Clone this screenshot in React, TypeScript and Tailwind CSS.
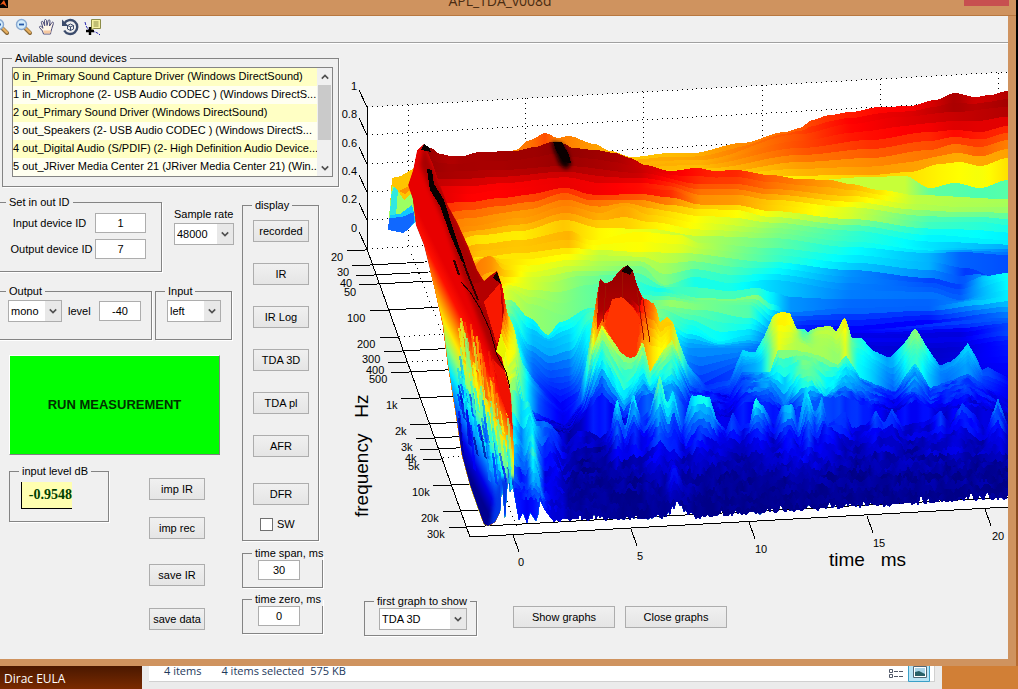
import type { ReactNode } from 'react';

type Key = [x: number, y: number, value: number];

interface Slice {
  steps: number;
  sharp?: boolean;
  noise?: number;
  keys: Key[];
}

const DEVICES = [
  '0 in_Primary Sound Capture Driver (Windows DirectSound)',
  '1 in_Microphone (2- USB Audio CODEC ) (Windows DirectS...',
  '2 out_Primary Sound Driver (Windows DirectSound)',
  '3 out_Speakers (2- USB Audio CODEC ) (Windows DirectS...',
  '4 out_Digital Audio (S/PDIF) (2- High Definition Audio Device...',
  '5 out_JRiver Media Center 21 (JRiver Media Center 21) (Win...',
];

// Slices of the waterfall, from the back of the plot to the front
const SLICES: Slice[] = [
  { steps: 1, keys: [[500, 158, 0.75], [515, 150, 0.75], [530, 140, 0.76], [545, 133, 0.8], [558, 138, 0.75], [568, 136, 0.75], [595, 144, 0.72], [610, 151, 0.7], [632, 157, 0.68], [670, 153, 0.69], [692, 153, 0.7], [742, 143, 0.74], [785, 132, 0.77], [800, 128, 0.79], [812, 120, 0.81], [830, 115, 0.83], [850, 112, 0.85], [880, 107, 0.87], [910, 106, 0.88], [935, 100, 0.92], [955, 93, 0.96], [975, 97, 0.92], [990, 95, 0.93], [1008, 91, 0.95]] },
  { steps: 2, keys: [[500, 170, 0.7], [700, 160, 0.7], [800, 134, 0.8], [850, 124, 0.87], [900, 117, 0.9], [955, 112, 0.93], [1008, 107, 0.95]] },
  { steps: 2, keys: [[500, 180, 0.7], [700, 165, 0.68], [800, 148, 0.78], [870, 140, 0.82], [930, 132, 0.83], [955, 130, 0.86], [980, 132, 0.84], [1008, 126, 0.83]] },
  { steps: 2, keys: [[500, 190, 0.66], [720, 172, 0.66], [800, 162, 0.72], [870, 158, 0.74], [930, 150, 0.76], [955, 144, 0.76], [980, 147, 0.78], [1008, 140, 0.75]] },
  { steps: 2, keys: [[500, 200, 0.6], [760, 176, 0.63], [870, 175, 0.68], [910, 172, 0.66], [940, 164, 0.64], [960, 162, 0.63], [980, 166, 0.62], [1008, 158, 0.66]] },
  { steps: 1, keys: [[500, 204, 0.6], [800, 181, 0.58], [870, 177, 0.57], [905, 176, 0.57], [930, 188, 0.47], [955, 183, 0.46], [980, 188, 0.45], [1008, 180, 0.46]] },
  { steps: 1, keys: [[413, 175, 0.95], [417, 152, 0.97], [424, 146, 0.98], [431, 148, 0.97], [440, 154, 0.96], [452, 156, 0.95], [462, 156, 0.96], [480, 152, 0.96], [515, 151, 0.97], [535, 147, 0.97], [552, 142, 0.98], [565, 144, 0.99], [572, 148, 0.98], [595, 150, 0.97], [615, 153, 0.96], [630, 158, 0.94], [645, 165, 0.92], [670, 171, 0.89], [697, 168, 0.86], [715, 171, 0.84], [735, 170, 0.84], [770, 175, 0.78], [800, 179, 0.75], [830, 180, 0.72], [850, 184, 0.7], [880, 190, 0.65], [915, 195, 0.56], [1008, 199, 0.54]] },
  { steps: 2, keys: [[430, 172, 0.97], [500, 170, 0.95], [565, 166, 0.96], [640, 173, 0.93], [700, 184, 0.8], [735, 184, 0.79], [770, 189, 0.75], [850, 196, 0.66], [915, 204, 0.56], [960, 207, 0.54], [1008, 207, 0.53]] },
  { steps: 3, keys: [[430, 192, 0.9], [470, 194, 0.86], [500, 190, 0.86], [565, 183, 0.88], [600, 190, 0.87], [640, 188, 0.85], [670, 190, 0.82], [700, 200, 0.72], [735, 200, 0.71], [770, 205, 0.66], [850, 213, 0.57], [930, 222, 0.42], [980, 222, 0.4], [1008, 225, 0.38]] },
  { steps: 2, keys: [[430, 215, 0.8], [470, 210, 0.78], [500, 206, 0.77], [530, 202, 0.77], [565, 193, 0.8], [590, 200, 0.78], [640, 200, 0.75], [670, 205, 0.7], [700, 209, 0.66], [735, 210, 0.64], [770, 217, 0.58], [850, 225, 0.47], [930, 235, 0.38], [1008, 240, 0.37]] },
  { steps: 2, keys: [[430, 235, 0.75], [470, 226, 0.72], [520, 218, 0.7], [567, 206, 0.73], [600, 213, 0.69], [625, 206, 0.7], [650, 215, 0.66], [700, 223, 0.6], [770, 228, 0.5], [850, 236, 0.41], [930, 248, 0.34], [1008, 249, 0.24]] },
  { steps: 2, keys: [[430, 250, 0.7], [480, 235, 0.65], [520, 231, 0.64], [565, 220, 0.68], [600, 228, 0.63], [650, 229, 0.6], [700, 236, 0.55], [770, 238, 0.48], [850, 247, 0.38], [930, 253, 0.3], [960, 252, 0.22], [1008, 255, 0.2]] },
  { steps: 1, keys: [[430, 262, 0.76], [480, 244, 0.69], [520, 240, 0.68], [570, 231, 0.7], [590, 240, 0.63], [640, 232, 0.63], [680, 235, 0.61], [700, 243, 0.56], [770, 248, 0.45], [850, 255, 0.36], [930, 262, 0.3], [965, 268, 0.18], [1008, 282, 0.2]] },
  { steps: 2, keys: [[430, 270, 0.76], [480, 257, 0.66], [520, 253, 0.66], [570, 248, 0.66], [600, 250, 0.58], [640, 252, 0.6], [680, 253, 0.56], [770, 262, 0.42], [850, 270, 0.28], [930, 278, 0.2], [960, 284, 0.2], [985, 276, 0.34], [1008, 273, 0.4]] },
  { steps: 3, keys: [[440, 300, 0.8], [490, 256, 0.74], [505, 270, 0.68], [530, 272, 0.6], [570, 266, 0.57], [640, 266, 0.49], [665, 285, 0.48], [695, 277, 0.4], [730, 283, 0.4], [770, 280, 0.34], [850, 290, 0.25], [930, 292, 0.24], [960, 300, 0.24], [1008, 284, 0.38]] },
  { steps: 2, keys: [[440, 310, 0.8], [510, 283, 0.62], [550, 282, 0.55], [580, 276, 0.5], [620, 275, 0.45], [660, 288, 0.39], [700, 298, 0.5], [730, 299, 0.5], [757, 295, 0.51], [772, 304, 0.4], [790, 312, 0.24], [850, 308, 0.22], [930, 306, 0.22], [980, 300, 0.32], [1008, 296, 0.36]] },
  { steps: 3, keys: [[440, 320, 0.8], [510, 290, 0.58], [530, 304, 0.53], [565, 315, 0.5], [590, 302, 0.48], [640, 300, 0.45], [670, 300, 0.53], [700, 304, 0.5], [750, 305, 0.46], [772, 322, 0.28], [800, 325, 0.16], [850, 326, 0.13], [930, 320, 0.13], [1008, 312, 0.25]] },
  { steps: 1, keys: [[440, 325, 0.8], [510, 300, 0.5], [530, 318, 0.36], [548, 335, 0.36], [560, 322, 0.38], [590, 308, 0.42], [660, 306, 0.5], [700, 310, 0.46], [750, 318, 0.4], [776, 332, 0.22], [800, 330, 0.15], [850, 330, 0.12], [1008, 318, 0.22]] },
  { steps: 3, keys: [[440, 330, 0.8], [510, 308, 0.5], [530, 334, 0.32], [550, 341, 0.31], [570, 334, 0.34], [590, 312, 0.46], [660, 310, 0.5], [690, 325, 0.4], [720, 341, 0.37], [750, 335, 0.34], [780, 342, 0.18], [860, 335, 0.11], [960, 332, 0.1], [1008, 326, 0.2]] },
  { steps: 5, keys: [[440, 350, 0.8], [510, 320, 0.45], [530, 362, 0.24], [550, 378, 0.18], [570, 376, 0.2], [590, 330, 0.4], [660, 330, 0.45], [690, 348, 0.26], [740, 348, 0.26], [780, 352, 0.18], [860, 352, 0.1], [940, 358, 0.08], [1008, 350, 0.14]] },
  { steps: 4, sharp: true, keys: [[440, 370, 0.8], [512, 340, 0.5], [535, 378, 0.2], [560, 403, 0.11], [580, 390, 0.17], [592, 350, 0.42], [660, 350, 0.4], [700, 385, 0.15], [740, 365, 0.2], [780, 372, 0.15], [860, 372, 0.1], [1008, 375, 0.11]] },
  { steps: 1, sharp: true, noise: 1, keys: [[480, 300, 0.95], [490, 278, 0.95], [497, 272, 0.98], [502, 285, 0.93], [507, 312, 0.7], [514, 328, 0.6], [521, 360, 0.46], [532, 378, 0.28], [546, 394, 0.16], [562, 409, 0.11], [578, 398, 0.15], [586, 365, 0.35], [592, 325, 0.65], [597, 295, 0.9], [600, 278, 0.95], [605, 284, 0.95], [612, 280, 0.94], [620, 270, 0.97], [627, 265, 1], [633, 271, 0.98], [637, 285, 0.94], [643, 298, 0.84], [655, 304, 0.74], [660, 322, 0.66], [667, 317, 0.68], [673, 322, 0.66], [680, 345, 0.5], [688, 365, 0.32], [705, 385, 0.17], [730, 380, 0.2], [742, 350, 0.34], [755, 353, 0.34], [765, 335, 0.44], [773, 316, 0.58], [779, 312, 0.63], [790, 313, 0.64], [797, 330, 0.54], [803, 328, 0.42], [808, 332, 0.46], [817, 327, 0.55], [831, 326, 0.56], [836, 332, 0.54], [845, 316, 0.64], [852, 338, 0.44], [862, 338, 0.4], [872, 350, 0.35], [890, 358, 0.27], [905, 342, 0.42], [915, 327, 0.53], [925, 344, 0.42], [940, 366, 0.25], [955, 359, 0.28], [968, 343, 0.34], [975, 355, 0.3], [982, 370, 0.2], [988, 367, 0.2], [1008, 378, 0.12]] },
  { steps: 5, sharp: true, noise: 1, keys: [[490, 330, 0.9], [500, 334, 0.64], [508, 350, 0.62], [515, 350, 0.6], [523, 395, 0.4], [540, 405, 0.18], [565, 420, 0.09], [583, 395, 0.2], [592, 350, 0.55], [602, 324, 0.74], [612, 338, 0.8], [620, 352, 0.81], [630, 358, 0.8], [636, 356, 0.77], [643, 335, 0.74], [650, 345, 0.66], [662, 348, 0.6], [672, 332, 0.66], [690, 378, 0.24], [705, 400, 0.12], [730, 392, 0.15], [742, 366, 0.25], [760, 362, 0.3], [770, 350, 0.46], [778, 344, 0.6], [787, 345, 0.56], [797, 340, 0.54], [812, 348, 0.53], [825, 345, 0.53], [838, 354, 0.5], [846, 340, 0.6], [855, 362, 0.38], [872, 370, 0.32], [895, 388, 0.2], [905, 370, 0.34], [915, 352, 0.44], [930, 374, 0.3], [945, 380, 0.22], [968, 362, 0.28], [985, 388, 0.15], [1008, 395, 0.1]] },
  { steps: 1, sharp: true, noise: 1, keys: [[490, 350, 0.8], [501, 333, 0.6], [508, 362, 0.62], [516, 352, 0.58], [524, 405, 0.36], [540, 415, 0.14], [565, 425, 0.08], [583, 400, 0.18], [592, 352, 0.5], [602, 325, 0.63], [612, 340, 0.56], [622, 354, 0.52], [630, 358, 0.5], [636, 356, 0.5], [643, 340, 0.6], [650, 372, 0.45], [662, 352, 0.54], [672, 340, 0.58], [690, 384, 0.22], [730, 395, 0.13], [742, 372, 0.22], [770, 372, 0.34], [778, 350, 0.5], [797, 350, 0.5], [820, 356, 0.5], [838, 365, 0.46], [846, 355, 0.44], [860, 378, 0.28], [895, 392, 0.17], [915, 362, 0.36], [930, 388, 0.2], [968, 374, 0.22], [1008, 400, 0.09]] },
  { steps: 6, sharp: true, noise: 2, keys: [[490, 370, 0.8], [508, 385, 0.6], [516, 380, 0.5], [524, 425, 0.26], [540, 425, 0.1], [570, 430, 0.05], [585, 405, 0.14], [593, 378, 0.3], [602, 352, 0.4], [615, 378, 0.36], [624, 398, 0.34], [632, 388, 0.32], [643, 366, 0.42], [650, 385, 0.35], [672, 362, 0.42], [690, 398, 0.15], [730, 405, 0.1], [742, 388, 0.18], [770, 382, 0.28], [784, 404, 0.2], [800, 378, 0.42], [812, 376, 0.43], [826, 396, 0.32], [845, 378, 0.3], [870, 395, 0.18], [895, 402, 0.1], [915, 382, 0.26], [930, 402, 0.14], [968, 388, 0.16], [1008, 412, 0.07]] },
  { steps: 5, sharp: true, noise: 3, keys: [[490, 390, 0.8], [508, 405, 0.5], [516, 400, 0.4], [524, 430, 0.2], [540, 432, 0.1], [570, 432, 0.04], [585, 415, 0.08], [602, 392, 0.16], [615, 408, 0.12], [624, 418, 0.1], [643, 395, 0.2], [672, 390, 0.26], [690, 412, 0.12], [730, 418, 0.08], [745, 402, 0.14], [770, 402, 0.16], [784, 415, 0.1], [812, 400, 0.2], [845, 396, 0.18], [870, 408, 0.12], [895, 412, 0.08], [915, 400, 0.14], [940, 414, 0.08], [968, 404, 0.1], [1008, 418, 0.06]] },
  { steps: 1, sharp: true, noise: 2, keys: [[500, 400, 0.6], [515, 376, 0.5], [521, 400, 0.36], [529, 402, 0.4], [536, 420, 0.24], [548, 422, 0.24], [558, 432, 0.14], [566, 446, 0.06], [578, 430, 0.1], [590, 432, 0.07], [600, 438, 0.05], [610, 430, 0.1], [617, 396, 0.34], [625, 430, 0.18], [633, 392, 0.38], [641, 418, 0.2], [650, 410, 0.2], [660, 374, 0.52], [667, 405, 0.32], [673, 389, 0.4], [682, 428, 0.15], [691, 396, 0.37], [700, 396, 0.36], [710, 398, 0.37], [717, 420, 0.2], [726, 430, 0.12], [733, 411, 0.22], [740, 426, 0.12], [750, 422, 0.14], [755, 397, 0.36], [764, 407, 0.25], [774, 425, 0.12], [782, 406, 0.28], [793, 404, 0.32], [798, 425, 0.16], [806, 385, 0.43], [815, 415, 0.22], [822, 396, 0.32], [828, 424, 0.14], [845, 411, 0.2], [852, 428, 0.1], [868, 424, 0.1], [876, 410, 0.22], [884, 424, 0.12], [892, 408, 0.22], [902, 426, 0.08], [930, 420, 0.09], [940, 410, 0.2], [950, 424, 0.08], [962, 403, 0.2], [975, 415, 0.14], [986, 430, 0.06], [998, 398, 0.28], [1008, 425, 0.08]] },
  { steps: 4, sharp: true, noise: 4, keys: [[500, 420, 0.5], [515, 425, 0.34], [524, 440, 0.22], [530, 418, 0.46], [536, 440, 0.3], [542, 455, 0.12], [550, 440, 0.16], [562, 465, 0.1], [575, 455, 0.03], [606, 450, 0.05], [617, 424, 0.2], [625, 444, 0.09], [633, 420, 0.2], [645, 440, 0.1], [660, 412, 0.28], [668, 435, 0.16], [674, 420, 0.2], [686, 446, 0.08], [700, 424, 0.2], [718, 440, 0.1], [740, 448, 0.06], [756, 428, 0.16], [775, 446, 0.06], [790, 430, 0.16], [800, 444, 0.08], [808, 418, 0.24], [817, 440, 0.1], [824, 425, 0.16], [850, 446, 0.06], [878, 432, 0.12], [892, 430, 0.12], [905, 446, 0.05], [962, 434, 0.1], [980, 446, 0.05], [998, 428, 0.13], [1008, 440, 0.06]] },
  { steps: 4, sharp: true, noise: 6, keys: [[500, 450, 0.5], [515, 450, 0.3], [524, 462, 0.16], [532, 446, 0.42], [538, 462, 0.3], [545, 480, 0.1], [556, 470, 0.12], [565, 485, 0.07], [575, 475, 0.02], [640, 465, 0.05], [660, 450, 0.12], [680, 465, 0.05], [700, 455, 0.08], [740, 462, 0.03], [808, 455, 0.1], [850, 462, 0.03], [900, 460, 0.05], [1008, 460, 0.03]] },
  { steps: 5, sharp: true, noise: 8, keys: [[500, 470, 0.4], [515, 475, 0.2], [525, 485, 0.12], [536, 476, 0.36], [542, 495, 0.2], [550, 500, 0.1], [562, 500, 0.08], [575, 490, 0.02], [640, 485, 0.03], [666, 485, 0.05], [674, 466, 0.16], [684, 488, 0.06], [700, 490, 0.02], [1008, 480, 0.02]] },
  { steps: 4, sharp: true, noise: 8, keys: [[500, 500, 0.14], [530, 500, 0.14], [540, 500, 0.2], [550, 510, 0.1], [565, 510, 0.06], [640, 510, 0], [674, 500, 0.06], [700, 510, 0], [1008, 500, 0]] },
];

const FREQS: [label: string, lx: number, ly: number, x: number, y: number, x2: number][] = [
  ['20', 331, 261, 347, 251, 368],
  ['30', 337, 276, 352, 266, 427],
  ['40', 340, 287, 356, 276, 431],
  ['50', 344, 296, 359, 285, 433],
  ['100', 347, 322, 370, 311, 438],
  ['200', 357, 348, 380, 338, 399],
  ['300', 362, 363, 384, 352, 445],
  ['400', 366, 374, 388, 363, 407],
  ['500', 369, 383, 391, 373, 449],
  ['1k', 386, 409, 401, 399, 453],
  ['2k', 395, 435, 410, 425, 459],
  ['3k', 401, 451, 416, 439, 462],
  ['4k', 405, 462, 420, 450, 464],
  ['5k', 408, 470, 423, 460, 443],
  ['10k', 412, 496, 433, 486, 472],
  ['20k', 421, 522, 443, 512, 478],
  ['30k', 427, 538, 449, 528, 1008],
];

const LEVELS: [label: string, y: number][] = [
  ['1', 107],
  ['0.8', 135],
  ['0.6', 164],
  ['0.4', 192],
  ['0.2', 220],
  ['0', 249],
];

const TIMES: [label: string, lx: number, x: number, y: number][] = [
  ['0', 521, 513, 535],
  ['5', 640, 631, 529],
  ['10', 761, 749, 522],
  ['15', 879, 867, 516],
  ['20', 998, 985, 509],
];

function makeRandom(seed: number) {
  let s = seed;
  return () => {
    s = (s * 1664525 + 1013904223) % 4294967296;
    return s / 4294967296;
  };
}

function jet(value: number) {
  const v = Math.max(0, Math.min(1, value));
  const channel = (center: number) =>
    Math.round(255 * Math.max(0, Math.min(1, 1.5 - Math.abs(4 * v - center))));
  return `rgb(${channel(3)},${channel(2)},${channel(1)})`;
}

function sample(keys: Key[], x: number, sharp?: boolean): [number, number] {
  if (x <= keys[0][0]) return [keys[0][1], keys[0][2]];
  for (let i = 1; i < keys.length; i++) {
    if (x <= keys[i][0]) {
      const a = keys[i - 1];
      const b = keys[i];
      const t = (x - a[0]) / (b[0] - a[0]);
      const e = sharp ? t : t * t * (3 - 2 * t);
      return [a[1] + (b[1] - a[1]) * e, a[2] + (b[2] - a[2]) * t];
    }
  }
  const last = keys[keys.length - 1];
  return [last[1], last[2]];
}

function buildLayers() {
  const random = makeRandom(11);
  const layers: { d: string; stops: [number, string][] }[] = [];

  SLICES.forEach((slice, index) => {
    const prev = SLICES[Math.max(0, index - 1)];
    const start = Math.max(413, slice.keys[0][0]);
    for (let step = 1; step <= slice.steps; step++) {
      const t = step / slice.steps;
      const shift = slice.steps > 1 ? (random() - 0.5) * 0.03 : 0;
      const noise = slice.noise ?? 0;
      const at = (x: number): [number, number] => {
        const a = sample(prev.keys, x, prev.sharp);
        const b = sample(slice.keys, x, slice.sharp);
        return [a[0] + (b[0] - a[0]) * t, a[1] + (b[1] - a[1]) * t + shift];
      };
      let d = `M${start} 545`;
      for (let x = start; x <= 1010; x += noise ? 2 : 3) {
        d += `L${x} ${(at(x)[0] + (random() - 0.5) * noise).toFixed(1)}`;
      }
      d += 'L1010 545Z';
      const stops: [number, string][] = [];
      for (let x = 413; x <= 1010; x += 6) {
        const jitter = noise > 1 ? (random() - 0.5) * 0.06 : 0;
        stops.push([(x - 413) / 597, jet(at(x)[1] + jitter)]);
      }
      layers.push({ d, stops });
    }
  });
  return layers;
}

function buildOutline() {
  const random = makeRandom(5);
  let d = 'M417 150L424 140L500 100L1008 70L1008 494';
  for (let x = 1006; x > 552; x -= 2) {
    const base = x > 700 ? 514 - (x - 700) * 0.06 : 518 - (x - 552) * 0.022;
    const spike = random() > 0.85 ? 5 : 0;
    const gap = x > 664 && x < 690 ? 12 - Math.abs(x - 678) : 0;
    d += `L${x} ${(base - spike - gap + random() * 4).toFixed(1)}`;
  }
  d += 'L545 510L540 500L538 515L536 521L530 512L527 523L523 512L519 520L513 487L510 492L508 476L505 518L502 484L500 512L495 522L488 526L484 524L478 508L470 485L462 455L456 415L448 365L443 325L434 285L424 245L416 225L413 200L408 185L413 170Z';
  return d;
}

function buildStreaks() {
  const random = makeRandom(23);
  const streaks: { x: number; y: number; h: number; color: string }[] = [];
  for (let i = 0; i < 110; i++) {
    const x = 456 + random() * 55;
    const y = 300 + (x - 452) * 1.3 + random() * 110;
    const depth = (-2 * x + y + 20) / 2.236;
    streaks.push({
      x: Math.round(x),
      y: Math.round(y),
      h: 16 + Math.round(random() * 34),
      color: jet(0.5 - (depth + 250) * 0.015 + (random() - 0.45) * 0.24),
    });
  }
  return streaks;
}

const layers = buildLayers();
const outline = buildOutline();
const streaks = buildStreaks();

const WALL =
  'M417 150L424 144L432 162L440 185L448 206L457 222L468 246L477 270L484 281L491 275L497 271L502 285L504 310L499 345L505 372L511 395L514 450L514 487L513 530L480 530L465 480L456 415L448 365L443 325L434 285L424 245L416 225L413 200L408 185L413 170Z';

function WaterfallPlot() {
  return (
    <svg
      viewBox="340 43 668 548"
      className="block h-auto w-full overflow-visible font-['Liberation_Sans',Arial,sans-serif]"
      role="img"
      aria-label="TDA 3D"
    >
      <defs>
        {layers.map((layer, i) => (
          <linearGradient key={i} id={`slice${i}`} gradientUnits="userSpaceOnUse" x1="413" y1="0" x2="1010" y2="0">
            {layer.stops.map(([offset, color], k) => (
              <stop key={k} offset={offset.toFixed(3)} stopColor={color} />
            ))}
          </linearGradient>
        ))}
        <linearGradient id="wall" gradientUnits="userSpaceOnUse" x1="250" y1="-125" x2="170" y2="-85">
          <stop offset="0" stopColor="#e80000" />
          <stop offset="0.1" stopColor="#ff1000" />
          <stop offset="0.19" stopColor="#ff7800" />
          <stop offset="0.29" stopColor="#ffe800" />
          <stop offset="0.38" stopColor="#90ff70" />
          <stop offset="0.48" stopColor="#00f0ff" />
          <stop offset="0.59" stopColor="#0070ff" />
          <stop offset="0.7" stopColor="#0000e8" />
          <stop offset="0.81" stopColor="#000090" />
        </linearGradient>
        <linearGradient id="floor" x1="0" y1="0" x2="0" y2="1">
          <stop offset="0" stopColor="#0000a0" stopOpacity="0" />
          <stop offset="1" stopColor="#000088" stopOpacity="0.8" />
        </linearGradient>
        <linearGradient id="ridge" x1="0" y1="0" x2="0" y2="1">
          <stop offset="0" stopColor="#900000" />
          <stop offset="0.7" stopColor="#b00000" />
          <stop offset="1" stopColor="#ff1800" />
        </linearGradient>
        <filter id="soft" x="-50%" y="-50%" width="200%" height="200%">
          <feGaussianBlur stdDeviation="2" />
        </filter>
        <clipPath id="outline">
          <path d={outline} />
        </clipPath>
        <clipPath id="wallShape">
          <path d={WALL} />
        </clipPath>
      </defs>

      <path d="M367 107L1008 72V507L470 537L367 249Z" fill="#fff" />

      <g stroke="#000" strokeWidth="1" fill="none" shapeRendering="crispEdges">
        <g strokeDasharray="1 4">
          {LEVELS.map(([label, y]) => (
            <path key={label} d={`M367 ${y}L1008 ${y - 35}`} />
          ))}
          <path d="M408 105V245L520 535M525 98V240M643 92V230M762 85V230M880 79V230M998 73V230" />
          <path d="M399 337L441 334M407 362L447 360M443 458L464 456" />
        </g>
        <path d="M367 107V249L470 537L1008 507" />
        {LEVELS.map(([label, y]) => (
          <path key={label} d={`M367 ${y}L359 ${y - 17}`} />
        ))}
        {FREQS.map(([label, , , x, y, x2]) => (
          <path key={label} d={`M${x} ${y}L${x2} ${y - (x2 - x) * 0.055}`} />
        ))}
        {TIMES.map(([label, , x, y]) => (
          <path key={label} d={`M${x} ${y}l6 17`} />
        ))}
      </g>

      {/* surface behind time zero */}
      <g shapeRendering="crispEdges">
        <path d="M392 178L401 176L414 168L416 222L408 229L403 233L388 230L390 205Z" fill="#ffc400" />
        <path d="M392 186L396 188L404 200L413 192L416 222L403 233L388 230L390 205Z" fill="#9cff62" />
        <path d="M391 195L394 187L398 190L396 216L390 218Z" fill="#30e8e0" />
        <path d="M390 215L400 214L412 205L416 222L403 233L388 230Z" fill="#10c8ff" />
        <path d="M389 218L402 217L414 212L414 222L408 230L403 233L388 230Z" fill="#1068ff" />
        <path d="M399 191L409 186L415 176L416 186L405 194Z" fill="#ff9000" />
      </g>

      <g clipPath="url(#outline)" shapeRendering="crispEdges">
        {layers.map((layer, i) => (
          <path key={i} d={layer.d} fill={`url(#slice${i})`} />
        ))}
        <path d="M570 460H1008V545H570Z" fill="url(#floor)" />

        {/* resonance tops */}
        <path d="M552 142L562 143L567 152L571 164L566 169L560 165L554 150Z" fill="#0a0000" filter="url(#soft)" />
        <path d="M553 142L562 142L569 155L571 163L563 162L556 150Z" fill="#0a0000" />
        <path d="M597 330L598 296L600 279L605 285L612 281L620 271L627 266L633 272L637 285L642 298L640 308L632 300L622 297L612 304L606 312Z" fill="url(#ridge)" />
        <path d="M605 325L612 299L622 297L632 306L640 318L636 356L630 358L620 352L612 336Z" fill="#ff3400" />
        <path d="M621 271L627 265L633 270L630 275Z" fill="#100000" />
        <path d="M622 272V298M606 286L603 322M637 290L644 340M643 300L650 342" stroke="#a01000" fill="none" />

        <g clipPath="url(#wallShape)">
          <path d={WALL} fill="url(#wall)" />
          <path d="M498 478H518V540H488Z" fill="#0038e8" filter="url(#soft)" />
          {streaks.map((s, i) => (
            <path key={i} d={`M${s.x} ${s.y}l2 0l4 ${s.h}l-3 -4Z`} fill={s.color} opacity="0.7" />
          ))}
          <path d="M424 144L440 185L457 222L484 281L497 271L504 310L500 345L508 385L510 400L496 365L478 318L462 275L444 222L430 190L420 165Z" fill="#a80000" filter="url(#soft)" />
          <path d="M470 285L484 281L497 271L504 310L500 342L490 320Z" fill="#b40000" />
          <path d="M484 302L500 283L503 325L497 345Z" fill="#f81800" />
          <path d="M494 360L508 375L513 430L500 395Z" fill="#f01000" />
        </g>
        <path d="M427 169L432 170L434 184L444 200L454 232L466 266L462 262L450 234L440 206L430 190Z" fill="#080000" />
        <path d="M461 282L470 292L480 308L490 330L497 355L506 372L510 388" stroke="#280000" strokeWidth="1" fill="none" />
        <path d="M464 264L470 280L478 300M454 260L459 275" stroke="#300000" strokeWidth="2" fill="none" />
        <path d="M421 150L424 144L429 147L431 152Z" fill="#080000" />
        <path d="M493 278L497 271L501 284Z" fill="#180000" />
        <path d="M496 352L501 332L506 350L504 360Z" fill="#e8f400" />
      </g>

      <g fontSize="11">
        {LEVELS.map(([label, y]) => (
          <text key={label} x="357" y={y - 17} textAnchor="end">
            {label}
          </text>
        ))}
        {FREQS.map(([label, x, y]) => (
          <text key={label} x={x} y={y}>
            {label}
          </text>
        ))}
        {TIMES.map(([label, x, , y]) => (
          <text key={label} x={x} y={y + 31} textAnchor="middle">
            {label}
          </text>
        ))}
      </g>
      <text x="829" y="566" fontSize="19" className="whitespace-pre">
        {'time   ms'}
      </text>
      <text transform="translate(368 517) rotate(-90)" fontSize="19" className="whitespace-pre">
        {'frequency   Hz'}
      </text>
    </svg>
  );
}

function Panel({ title, className, children }: { title: string; className?: string; children: ReactNode }) {
  return (
    <fieldset className={`min-w-0 border border-[#848484] shadow-[1px_1px_0_#fff] ${className ?? ''}`}>
      <legend className="ml-[9px] px-[3px] leading-[14px] whitespace-nowrap">{title}</legend>
      {children}
    </fieldset>
  );
}

function PushButton({ children, className }: { children: ReactNode; className?: string }) {
  return (
    <button
      type="button"
      className={`h-[22px] border border-[#adadad] bg-linear-to-b from-[#f0f0f0] to-[#e5e5e5] text-center whitespace-nowrap ${className ?? 'w-14'}`}
    >
      {children}
    </button>
  );
}

function Chevron({ up }: { up?: boolean }) {
  return (
    <svg viewBox="0 0 10 8" className="h-2 w-2" fill="none" stroke="#505050" strokeWidth="2">
      <path d={up ? 'M1 6L5 2L9 6' : 'M1 2L5 6L9 2'} />
    </svg>
  );
}

function DropDown({ id, value, className }: { id: string; value: string; className: string }) {
  return (
    <div className={`relative h-[22px] border border-[#adadad] bg-white ${className}`}>
      <select id={id} aria-label={id} defaultValue={value} className="block h-full w-full appearance-none pl-0.5 outline-none">
        <option>{value}</option>
      </select>
      <span className="pointer-events-none absolute inset-y-0 right-0 flex w-4 items-center justify-center bg-[#e8e8e8]">
        <Chevron />
      </span>
    </div>
  );
}

function NumberBox({ id, value, className }: { id: string; value: string; className: string }) {
  return (
    <input
      id={id}
      aria-label={id}
      type="text"
      defaultValue={value}
      className={`h-5 border border-[#adadad] bg-white text-center outline-none ${className}`}
    />
  );
}

function Magnifier({ plus }: { plus?: boolean }) {
  return (
    <svg viewBox="0 0 18 18" className="size-[18px]">
      <path d="M10 10L15 15" stroke="#8a6a3a" strokeWidth="4" strokeLinecap="round" />
      <path d="M10.500 10L15 14.500" stroke="#e8b060" strokeWidth="2.400" strokeLinecap="round" />
      <circle cx="6.500" cy="6.500" r="5" fill="#d4ecfa" stroke="#88a8d0" strokeWidth="1.400" />
      <path d={plus ? 'M4 6.500H9M6.500 4V9' : 'M4 6.500H9'} stroke="#2458a8" strokeWidth="1.800" />
    </svg>
  );
}

function Toolbar() {
  return (
    <div className="flex h-[27px] items-center gap-[5px] border-b border-[#a0a0a0] pb-1 shadow-[0_1px_0_#fff]">
      <button type="button" aria-label="Zoom In" className="-ml-2">
        <Magnifier plus />
      </button>
      <button type="button" aria-label="Zoom Out">
        <Magnifier />
      </button>
      <button type="button" aria-label="Pan">
        <svg viewBox="0 0 18 18" className="size-[18px]">
          <path
            d="M5.500 16L4.500 13L1.500 9.500C1 8.500 2.200 7.800 3.200 8.600L5 10.300L3.400 4.500C3.200 3.200 4.800 2.900 5.200 4L6.700 7.800L6.500 2.500C6.500 1.200 8.300 1.200 8.500 2.500L9 7.500L10.200 2.600C10.500 1.400 12.100 1.700 12 3L11.500 8L13.800 4.600C14.500 3.600 15.900 4.300 15.400 5.500L13.800 10.500L12.800 14L12.500 16Z"
            fill="#fff6e8"
            stroke="#4a4a78"
          />
          <path d="M6 15.500L5.500 12.500H13L12.300 15.500Z" fill="#f6c8a0" />
        </svg>
      </button>
      <button type="button" aria-label="Rotate 3D">
        <svg viewBox="0 0 18 18" className="size-[18px]" fill="none">
          <path d="M3.200 5.500A7 7 0 1 1 3.200 12.500" stroke="#3c4c6c" strokeWidth="2.400" />
          <path d="M1 1.500V8H7.500Z" fill="#3c4c6c" />
          <path d="M6.500 7.500L9.500 6L12.500 7.500V11L9.500 12.500L6.500 11ZM6.500 7.500L9.500 8.800L12.500 7.500M9.500 8.800V12.500" stroke="#3c4c6c" />
        </svg>
      </button>
      <button type="button" aria-label="Data Cursor">
        <svg viewBox="0 0 18 18" className="size-[18px]" fill="none">
          <path d="M1 4C2 9 4 13 9 13.500C12 14 14 15 16 17" stroke="#2828b0" strokeDasharray="3 1" />
          <path d="M7.500 1.500H16.500V10.500H9.500L7.500 12Z" fill="#f4f0a0" stroke="#8c8c48" />
          <path d="M9.500 4H14.500M9.500 6H14.500M9.500 8H14.500" stroke="#8c8c48" />
          <path d="M6 9V17M2 13H10" stroke="#000" strokeWidth="2.400" />
        </svg>
      </button>
    </div>
  );
}

function DeviceList() {
  return (
    <Panel title="Avilable sound devices" className="mr-px ml-0.5 pb-[9px]">
      <div className="mt-0.5 mr-[5px] ml-[9px] flex border border-[#848484] bg-white">
        <ul role="listbox" aria-label="Avilable sound devices" className="min-w-0 flex-1">
          {DEVICES.map((device, i) => (
            <li
              key={device}
              role="option"
              aria-selected={false}
              className={`h-[18px] leading-[17px] whitespace-nowrap ${i % 2 === 0 ? 'bg-[#ffffc4]' : 'bg-[#fffff0]'}`}
            >
              {device}
            </li>
          ))}
        </ul>
        <div className="flex w-[15px] flex-col items-center bg-[#f0f0f0]">
          <span className="flex h-[17px] items-center">
            <Chevron up />
          </span>
          <span className="h-[55px] w-[13px] bg-[#cacaca]" />
          <span className="mt-auto flex h-[17px] items-center">
            <Chevron />
          </span>
        </div>
      </div>
    </Panel>
  );
}

function Controls() {
  return (
    <div className="w-[242px] shrink-0">
      <div className="flex">
        <Panel title="Set in out ID" className="-ml-1 w-[166px] pb-3">
          <div className="mt-1 flex items-center pl-[11px]">
            <label htmlFor="input-device" className="w-[87px] pr-1 text-center">Input device ID</label>
            <NumberBox id="input-device" value="1" className="w-[51px]" />
          </div>
          <div className="mt-1.5 flex items-center pl-[11px]">
            <label htmlFor="output-device" className="w-[87px] text-center">Output device ID</label>
            <NumberBox id="output-device" value="7" className="w-[51px]" />
          </div>
        </Panel>
        <div className="mt-3 ml-3 w-[60px]">
          <label htmlFor="sample-rate" className="mb-0.5 block leading-[14px] whitespace-nowrap">Sample rate</label>
          <DropDown id="sample-rate" value="48000" className="w-[60px]" />
        </div>
      </div>

      <div className="mt-3 flex gap-[3px]">
        <Panel title="Output" className="-ml-1 w-[156px] pb-[17px]">
          <div className="mt-0.5 flex items-center pl-[11px]">
            <DropDown id="output" value="mono" className="w-[54px]" />
            <label htmlFor="level" className="ml-1.5 w-[31px]">level</label>
            <NumberBox id="level" value="-40" className="w-[42px]" />
          </div>
        </Panel>
        <Panel title="Input" className="w-[77px] pb-[17px]">
          <DropDown id="input" value="left" className="mt-0.5 ml-[11px] w-[54px]" />
        </Panel>
      </div>

      <button
        type="button"
        className="mt-[15px] ml-[9px] block h-[100px] w-[211px] border border-t-white border-r-[#808080] border-b-[#808080] border-l-white bg-[#00ff00] text-[13px] font-bold text-[#003000]"
      >
        RUN MEASUREMENT
      </button>

      <div className="mt-[9px] flex items-start gap-10 pl-[9px]">
        <Panel title="input level dB" className="w-[100px] pb-3">
          <output className="mt-1 ml-[11px] flex h-[27px] w-[51px] items-center justify-end border-b border-l border-black bg-[#ffffb0] font-['Liberation_Serif',serif] text-sm font-bold text-[#004000]">
            -0.9548
          </output>
        </Panel>
        <div className="mt-3.5 flex flex-col items-start">
          <PushButton>imp IR</PushButton>
          <PushButton className="mt-[17px] w-14">imp rec</PushButton>
          <PushButton className="mt-[25px] w-14">save IR</PushButton>
          <PushButton className="mt-[22px] w-14">save data</PushButton>
        </div>
      </div>
    </div>
  );
}

function DisplayColumn() {
  return (
    <div className="mt-[3px] w-[81px]">
      <Panel title="display" className="mr-1 pb-[9px]">
        <div className="pt-2 pl-2.5">
          <div className="flex flex-col items-start gap-[21px]">
            {['recorded', 'IR', 'IR Log', 'TDA 3D', 'TDA pl', 'AFR'].map((name) => (
              <PushButton key={name}>{name}</PushButton>
            ))}
          </div>
          <PushButton className="mt-[26px] w-14">DFR</PushButton>
          <label className="mt-3 ml-[7px] flex items-center gap-1">
            <input type="checkbox" className="size-[13px] appearance-none border border-[#707070] bg-white" />
            SW
          </label>
        </div>
      </Panel>
      <Panel title="time span, ms" className="mt-[5px] pb-[7px]">
        <NumberBox id="time-span" value="30" className="ml-[15px] block w-[42px]" />
      </Panel>
      <Panel title="time zero, ms" className="mt-1 pb-[7px]">
        <NumberBox id="time-zero" value="0" className="ml-[15px] block w-[42px]" />
      </Panel>
    </div>
  );
}

function DesktopStrip() {
  return (
    <div className="flex h-[23px] overflow-hidden bg-[#d17f36] font-['Open_Sans','Noto_Sans',sans-serif] text-xs">
      <div className="w-[142px] shrink-0 bg-linear-to-b from-[#4a1800] to-[#7a2a00] pt-1 pl-1 leading-[18px] text-white">
        Dirac EULA
      </div>
      <div className="min-w-0 flex-1 bg-[#ebebeb] px-[7px]">
        <div className="flex h-4 items-center border-r border-b border-[#d0d0d0] bg-white pr-1 pl-[15px] text-[11px] text-[#1e395b]">
          <span className="-mt-1.5 leading-4">4 items</span>
          <span className="-mt-1.5 ml-5 leading-4">4 items selected</span>
          <span className="-mt-1.5 ml-1.5 leading-4">575 KB</span>
          <svg viewBox="0 0 16 12" className="ml-auto h-3 w-4" fill="none" stroke="#505868">
            <path d="M1.500 1.500H4.500V4.500H1.500ZM1.500 6.500H4.500V9.500H1.500ZM6 3.500H10M11 3.500H15M6 8.500H10M11 8.500H15" />
          </svg>
          <svg viewBox="0 0 22 16" className="ml-1 h-4 w-[22px]">
            <path d="M0.500 -1H21.500V15.500H0.500Z" fill="#b8e4f6" stroke="#3aa0c8" />
            <path d="M5.500 0.500H18.500V11.500H5.500Z" fill="#fff" stroke="#506878" />
            <path d="M7 2H17V10H7Z" fill="#a8d4e8" />
            <path d="M7 6L11 5L17 8V10H7Z" fill="#286068" />
          </svg>
        </div>
      </div>
      <div className="w-[76px] shrink-0" />
    </div>
  );
}

export default function App() {
  return (
    <div className="flex min-h-screen flex-col overflow-hidden bg-[#d17f36] font-['Liberation_Sans',Arial,sans-serif] text-[11px] leading-[14px] text-black">
      <div className="flex flex-1 flex-col bg-linear-to-b from-black via-[#50260c] to-[#b86c30] pr-0.5">
        <main className="flex flex-1 flex-col border-r-8 border-b-[7px] border-[#cf935f] bg-[#f0f0f0]">
          <header className="-mr-2 flex h-4 items-start overflow-hidden border-b border-[#b87840] bg-[#cf935f] pr-[7px]">
            <svg viewBox="0 0 8 8" className="size-2 shrink-0 bg-black">
              <path d="M0 5L4 0L7 7L3 4Z" fill="#e85818" />
            </svg>
            <h1 className="-mt-[9px] flex-1 pl-7 text-center font-['Open_Sans','Noto_Sans',sans-serif] text-sm leading-5 text-[#4a2c12]">
              APL_TDA_v008d
            </h1>
            <button type="button" aria-label="Close" className="h-1.5 w-[45px] bg-[#c75050]" />
          </header>
          <Toolbar />
          <div className="flex flex-1 items-start pb-[23px]">
            <div className="w-[340px] shrink-0 pt-2">
              <DeviceList />
              <div className="mt-2 flex items-start">
                <Controls />
                <DisplayColumn />
              </div>
            </div>
            <div className="min-w-0 flex-1">
              <WaterfallPlot />
              <div className="mt-[3px] flex items-start pl-6">
                <Panel title="first graph to show" className="w-[113px] pb-[5px]">
                  <DropDown id="first-graph" value="TDA 3D" className="ml-3.5 w-[88px]" />
                </Panel>
                <PushButton className="mt-3 ml-9 w-[102px]">Show graphs</PushButton>
                <PushButton className="mt-3 ml-2.5 w-[102px]">Close graphs</PushButton>
              </div>
            </div>
          </div>
        </main>
      </div>
      <DesktopStrip />
    </div>
  );
}
